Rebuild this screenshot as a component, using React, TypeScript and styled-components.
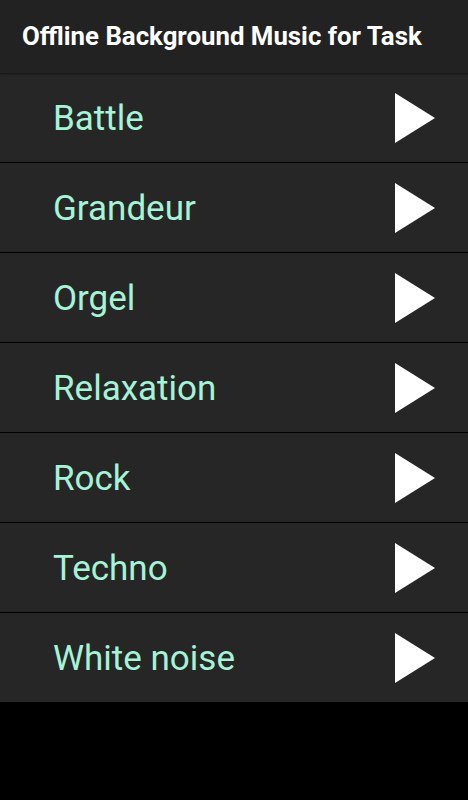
import React from 'react';
import styled, { createGlobalStyle } from 'styled-components';

const tracks = ['Battle', 'Grandeur', 'Orgel', 'Relaxation', 'Rock', 'Techno', 'White noise'];

const GlobalStyle = createGlobalStyle`
  html, body {
    margin: 0;
    padding: 0;
    background: #000000;
    font-family: Roboto, "Liberation Sans", sans-serif;
  }
`;

const Screen = styled.div`
  width: 468px;
  min-height: 800px;
  background: #000000;
  display: flex;
  flex-direction: column;
`;

const AppBar = styled.header`
  height: 73px;
  background: #222222;
  display: flex;
  align-items: center;
  padding: 0 22px;
  box-shadow: 0 1px 2px rgba(0, 0, 0, 0.5);
  position: relative;
  z-index: 1;
`;

const Title = styled.h1`
  margin: 0 0 2px;
  font-size: 25.8px;
  font-weight: 700;
  color: #ffffff;
  white-space: nowrap;
`;

const List = styled.ul`
  list-style: none;
  margin: 0;
  padding: 0;
`;

const Row = styled.li`
  height: 89px;
  background: #262626;
  border-bottom: 1px solid #000000;
  display: flex;
  align-items: center;
  justify-content: space-between;
  padding: 0 32px 0 53px;
`;

const TrackName = styled.span`
  font-size: 35px;
  color: #a6f3d6;
  margin-top: 2px;
`;

const PlayButton = styled.button`
  border: none;
  background: none;
  padding: 0;
  display: flex;
  cursor: pointer;
`;

const PlayIcon = () => (
  <svg width="42" height="50" viewBox="0 0 42 50">
    <polygon points="1,0 41,25 1,50" fill="#ffffff" />
  </svg>
);

const App: React.FC = () => (
  <Screen>
    <GlobalStyle />
    <AppBar>
      <Title>Offline Background Music for Task</Title>
    </AppBar>
    <List>
      {tracks.map(name => (
        <Row key={name}>
          <TrackName>{name}</TrackName>
          <PlayButton aria-label={`Play ${name}`}>
            <PlayIcon />
          </PlayButton>
        </Row>
      ))}
    </List>
  </Screen>
);

export default App;
